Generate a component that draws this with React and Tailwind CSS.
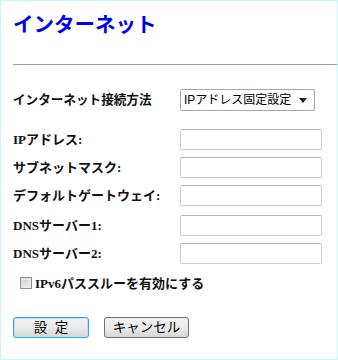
import React from 'react'

const labelFont = { fontFamily: '"Liberation Serif", "Noto Sans CJK JP", serif' }
const uiFont = { fontFamily: '"Liberation Sans", "Noto Sans CJK JP", sans-serif' }

function Field({ label, className = '' }) {
    return (
        <div className={`flex items-center h-[21px] ${className}`}>
            <div className="w-[167px] text-[13px] font-bold text-[#111] leading-none" style={labelFont}>
                {label}
            </div>
            <div className="w-[142px] h-[21px] bg-white border border-[#cfcfcf] border-t-[#b5b5b5] rounded-[2px]" />
        </div>
    )
}

export default function App() {
    return (
        <div className="w-[338px] h-[360px] border border-[#c6fafa] bg-white pl-[12px]">
            {/* Page Title */}
            <h1
                className="mt-[10px] h-[24px] leading-[24px] text-[20.5px] font-bold text-[#0000f0]"
                style={{ fontFamily: '"Noto Sans CJK JP", sans-serif' }}
            >
                インターネット
            </h1>

            <div className="mt-[29px] h-px bg-[#9a9a9a]" />

            {/* Connection type */}
            <div className="mt-[24px] flex items-center h-[22px]">
                <div className="w-[167px] text-[12.6px] font-bold text-[#111] leading-none" style={labelFont}>
                    インターネット接続方法
                </div>
                <div
                    className="w-[135px] h-[22px] border border-[#a8a8a8] rounded-[2px] bg-white flex items-center pl-[3px] pr-[7px] text-[12px] text-black"
                    style={uiFont}
                >
                    <span className="flex-1 leading-none">IPアドレス固定設定</span>
                    <svg width="8" height="5" viewBox="0 0 8 5">
                        <path d="M0 0 L8 0 L4 5 Z" fill="#222" />
                    </svg>
                </div>
            </div>

            {/* Address fields */}
            <Field label="IPアドレス:" className="mt-[18px]" />
            <Field label="サブネットマスク:" className="mt-[7px]" />
            <Field label="デフォルトゲートウェイ:" className="mt-[7px]" />
            <Field label="DNSサーバー1:" className="mt-[9px]" />
            <Field label="DNSサーバー2:" className="mt-[7px]" />

            {/* IPv6 passthrough */}
            <div className="mt-[11px] h-[16px] flex items-center pl-[7px]">
                <div className="w-[12px] h-[12px] border border-[#8e8e8e] bg-gradient-to-br from-[#d8d8d8] to-[#f4f4f4] p-px">
                    <div className="w-full h-full border border-[#e8e8e8] bg-gradient-to-br from-[#cfcfcf] to-[#efefef]" />
                </div>
                <span className="ml-[3px] text-[13px] font-bold text-[#111] leading-none" style={labelFont}>
                    IPv6パススルーを有効にする
                </span>
            </div>

            {/* Buttons */}
            <div className="mt-[26px] flex gap-[15px]">
                <button
                    className="w-[76px] h-[21px] rounded-[3px] border border-[#3c9ed8] bg-gradient-to-b from-[#f2f2f2] via-[#ebebeb] to-[#d6d6d6] text-[13.5px] text-black leading-none shadow-[inset_0_0_0_1px_#bfe4f7]"
                    style={uiFont}
                >
                    設&nbsp;&nbsp;定
                </button>
                <button
                    className="w-[85px] h-[21px] rounded-[3px] border border-[#707070] bg-gradient-to-b from-[#f2f2f2] via-[#ebebeb] to-[#d6d6d6] text-[13.5px] text-black leading-none"
                    style={uiFont}
                >
                    キャンセル
                </button>
            </div>
        </div>
    )
}
